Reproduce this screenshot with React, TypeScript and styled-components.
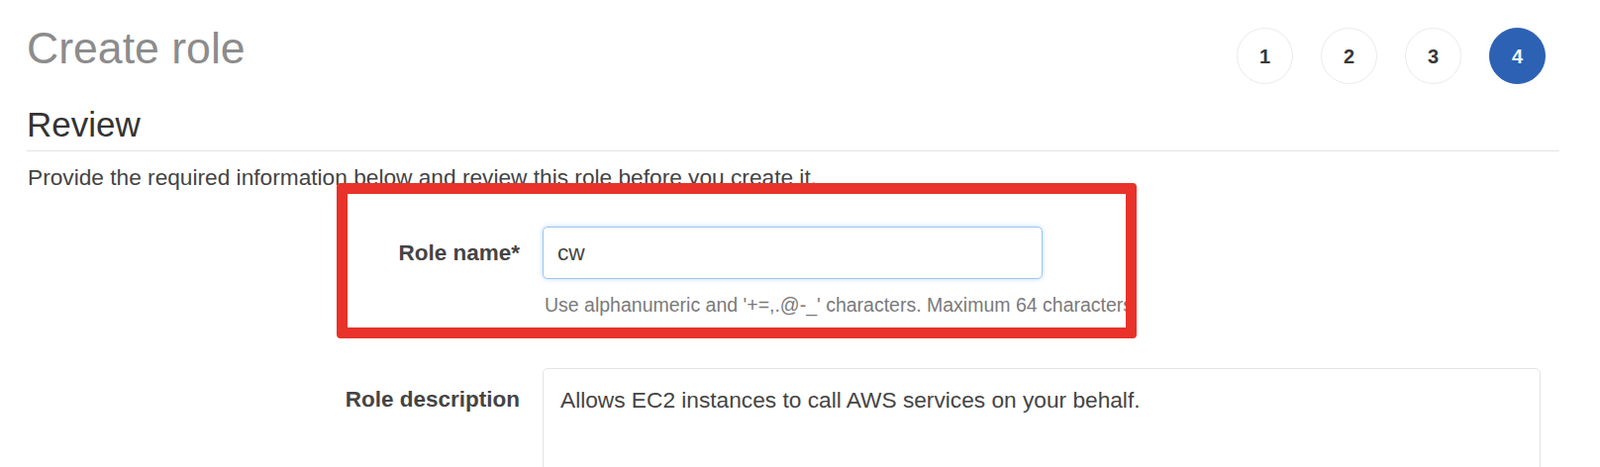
import React from "react";
import styled, { createGlobalStyle } from "styled-components";

const GlobalStyle = createGlobalStyle`
  html, body {
    margin: 0;
    padding: 0;
    background: #ffffff;
    overflow: hidden;
    font-family: "Liberation Sans", Arial, Helvetica, sans-serif;
  }
`;

const Page = styled.div`
  width: 1616px;
  height: 472px;
  box-sizing: border-box;
  padding: 0 41px 0 27px;
  overflow: hidden;
`;

const Header = styled.header`
  display: flex;
  justify-content: space-between;
  align-items: flex-start;
  height: 85px;
`;

const Title = styled.h1`
  margin: 24px 0 0 0;
  font-size: 44.6px;
  line-height: 50px;
  font-weight: 400;
  color: #8c8c8c;
`;

const Steps = styled.ol`
  display: flex;
  gap: 28px;
  list-style: none;
  margin: 28px 14px 0 0;
  padding: 0;
`;

const Step = styled.li<{ $active?: boolean }>`
  width: 57px;
  height: 57px;
  box-sizing: border-box;
  border-radius: 50%;
  border: 1px solid ${(p) => (p.$active ? "#2c61b3" : "#ebebeb")};
  background: ${(p) => (p.$active ? "#2c61b3" : "#ffffff")};
  color: ${(p) => (p.$active ? "#f4f7fc" : "#383838")};
  display: flex;
  align-items: center;
  justify-content: center;
  font-size: 20px;
  font-weight: 700;
  line-height: 1;
`;

const SectionTitle = styled.h2`
  margin: 21px 0 0 0;
  padding-bottom: 6px;
  border-bottom: 1px solid #e3e3e3;
  font-size: 35px;
  line-height: 40px;
  font-weight: 400;
  color: #333333;
`;

const Intro = styled.p`
  margin: 13px 0 0 1px;
  font-size: 22.7px;
  line-height: 26px;
  color: #444444;
`;

const HighlightArea = styled.div`
  position: relative;
  display: flow-root;
`;

const Annotation = styled.div`
  position: absolute;
  left: 313px;
  top: -7px;
  width: 808px;
  height: 157px;
  box-sizing: border-box;
  border: 11px solid #e8322a;
  border-radius: 4px;
  pointer-events: none;
`;

const FieldRow = styled.div<{ $top: number }>`
  display: flex;
  align-items: flex-start;
  gap: 23px;
  margin-top: ${(p) => p.$top}px;
`;

const Label = styled.label<{ $padTop: number }>`
  width: 498px;
  flex: none;
  text-align: right;
  font-size: 22.5px;
  line-height: 26px;
  font-weight: 700;
  color: #444444;
  padding-top: ${(p) => p.$padTop}px;
  box-sizing: border-box;
`;

const TextInput = styled.input`
  width: 505px;
  height: 53px;
  box-sizing: border-box;
  border: 1px solid #9fc5ec;
  border-radius: 5px;
  box-shadow: 0 0 5px rgba(102, 170, 235, 0.45);
  padding: 0 14px;
  font-family: inherit;
  font-size: 22.7px;
  color: #444444;
  outline: none;
  background: #ffffff;
`;

const Help = styled.div`
  margin: 14px 0 0 523px;
  font-size: 19.5px;
  line-height: 24px;
  color: #7a7a7a;
  white-space: nowrap;
`;

const TextArea = styled.textarea`
  width: 1008px;
  height: 140px;
  box-sizing: border-box;
  border: 1px solid #e4e4e4;
  border-radius: 5px;
  padding: 18px 17px;
  font-family: inherit;
  font-size: 22.7px;
  line-height: 26px;
  color: #444444;
  resize: none;
  outline: none;
  background: #ffffff;
`;

export default function App() {
  return (
    <>
      <GlobalStyle />
      <Page>
        <Header>
          <Title>Create role</Title>
          <Steps>
            <Step>1</Step>
            <Step>2</Step>
            <Step>3</Step>
            <Step $active>4</Step>
          </Steps>
        </Header>
        <SectionTitle>Review</SectionTitle>
        <Intro>Provide the required information below and review this role before you create it.</Intro>
        <HighlightArea>
          <FieldRow $top={37}>
            <Label $padTop={14}>Role name*</Label>
            <TextInput defaultValue="cw" />
          </FieldRow>
          <Help>Use alphanumeric and '+=,.@-_' characters. Maximum 64 characters</Help>
          <Annotation />
        </HighlightArea>
        <FieldRow $top={52}>
          <Label $padTop={19}>Role description</Label>
          <TextArea defaultValue="Allows EC2 instances to call AWS services on your behalf." />
        </FieldRow>
      </Page>
    </>
  );
}
